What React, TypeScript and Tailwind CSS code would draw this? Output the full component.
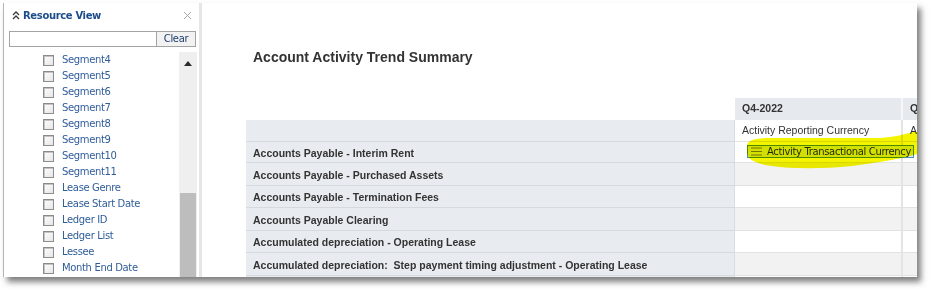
import React from "react";

const items = [
  "Segment4",
  "Segment5",
  "Segment6",
  "Segment7",
  "Segment8",
  "Segment9",
  "Segment10",
  "Segment11",
  "Lease Genre",
  "Lease Start Date",
  "Ledger ID",
  "Ledger List",
  "Lessee",
  "Month End Date",
  "Purchase Unit",
];

const rows = [
  { label: "Accounts Payable - Interim Rent", h: "h-[21px]", alt: false },
  { label: "Accounts Payable - Purchased Assets", h: "h-[23px]", alt: true },
  { label: "Accounts Payable - Termination Fees", h: "h-[22px]", alt: false },
  { label: "Accounts Payable Clearing", h: "h-[23px]", alt: true },
  { label: "Accumulated depreciation - Operating Lease", h: "h-[22px]", alt: false },
  {
    label: "Accumulated depreciation:  Step payment timing adjustment - Operating Lease",
    h: "h-[23px]",
    alt: true,
  },
  { label: "Accumulated depreciation - Right of Use", h: "h-[22px]", alt: false },
];

const tahoma = { fontFamily: '"DejaVu Sans", sans-serif' };
const arial = { fontFamily: '"Liberation Sans", Arial, sans-serif' };

function Checkbox() {
  return (
    <span className="block w-[11px] h-[11px] border border-[#8c8c8c] bg-gradient-to-br from-white to-[#e6e6e6] shadow-[inset_1px_1px_0_#c4c4c4]" />
  );
}

function ResourcePanel() {
  return (
    <div className="w-[196px] h-full shrink-0 border-l border-[#b5b5b5] bg-white flex flex-col" style={tahoma}>
      {/* header */}
      <div className="h-[25px] flex items-center pl-[8px] pr-[5px]">
        <svg width="8" height="9" viewBox="0 0 8 9" className="mr-[3px]">
          <path d="M1 4 L4 1 L7 4" fill="none" stroke="#3a3a3a" strokeWidth="1.3" />
          <path d="M1 8 L4 5 L7 8" fill="none" stroke="#3a3a3a" strokeWidth="1.3" />
        </svg>
        <span className="text-[10px] font-bold tracking-[-0.35px] text-[#1d4c8c]">Resource View</span>
        <svg width="9" height="9" viewBox="0 0 9 9" className="ml-auto mr-[2px]">
          <path d="M1 1 L8 8 M8 1 L1 8" stroke="#a6a6a6" strokeWidth="1" />
        </svg>
      </div>
      {/* search */}
      <div className="mt-[3px] ml-[5px] flex h-[16px]">
        <input className="w-[148px] h-[16px] border border-[#a3a3a3] bg-white outline-none" />
        <button className="w-[39px] h-[16px] border border-l-0 border-[#a3a3a3] bg-[#f2f2f2] text-[10px] tracking-[-0.35px] leading-[14px] text-[#20406e]">
          Clear
        </button>
      </div>
      {/* list */}
      <div className="mt-[5px] ml-[6px] flex flex-1 overflow-hidden">
        <div className="w-[169px]">
          {items.map((t) => (
            <div key={t} className="h-[16px] flex items-center pl-[33px] gap-[8px]">
              <Checkbox />
              <span className="text-[10px] tracking-[-0.35px] text-[#2f5d98] leading-none whitespace-nowrap">{t}</span>
            </div>
          ))}
        </div>
        <div className="w-[18px] bg-[#efefef] flex flex-col items-center">
          <svg width="8" height="5" viewBox="0 0 8 5" className="mt-[9px]">
            <path d="M0 5 L4 0 L8 5 Z" fill="#2b2b2b" />
          </svg>
          <div className="mt-[127px] w-[16px] flex-1 bg-[#bdbdbd]" />
        </div>
      </div>
    </div>
  );
}

function Report() {
  return (
    <div className="flex-1 h-full overflow-hidden bg-white pl-[44px]" style={arial}>
      <div className="mt-[46px] ml-[7px] text-[14px] leading-[16px] font-bold text-[#333333]">
        Account Activity Trend Summary
      </div>
      <div className="mt-[33px] w-[800px] text-[10.5px] text-[#333333] whitespace-nowrap">
        {/* header row */}
        <div className="flex h-[22px]">
          <div className="w-[489px] shrink-0 bg-white" />
          <div className="w-[168px] shrink-0 bg-[#e6eaee] flex items-center pl-[7px] font-bold border-r-2 border-[#f6f7f8]">
            Q4-2022
          </div>
          <div className="w-[140px] shrink-0 bg-[#e6eaee] flex items-center pl-[7px] font-bold">Q1-2023</div>
        </div>
        {/* currency row */}
        <div className="flex h-[22px]">
          <div className="w-[489px] shrink-0 bg-[#e8ecf0] border-b border-[#d6dade] border-r border-r-[#d9dde1]" />
          <div className="w-[168px] shrink-0 bg-white flex items-center pl-[7px] border-b border-[#e2e2e2] border-r-2 border-r-[#e4e4e4]">
            Activity Reporting Currency
          </div>
          <div className="w-[140px] shrink-0 bg-white flex items-center pl-[7px] border-b border-[#e2e2e2]">
            Activity Reporting Currency
          </div>
        </div>
        {rows.map((r) => (
          <div key={r.label} className={`flex ${r.h}`}>
            <div className="w-[489px] shrink-0 bg-[#e8ecf0] flex items-center pl-[7px] pt-[3px] font-bold whitespace-pre border-b border-[#d6dade] border-r border-r-[#d9dde1]">
              {r.label}
            </div>
            <div
              className={`w-[168px] shrink-0 border-b border-[#e2e2e2] border-r-2 border-r-[#e4e4e4] ${
                r.alt ? "bg-[#f2f2f2]" : "bg-white"
              }`}
            />
            <div className={`w-[140px] shrink-0 border-b border-[#e2e2e2] ${r.alt ? "bg-[#f2f2f2]" : "bg-white"}`} />
          </div>
        ))}
      </div>
    </div>
  );
}

export default function App() {
  return (
    <div className="relative w-[930px] h-[291px] bg-white pt-[3px] pl-[3px] overflow-hidden">
      <div className="w-[914px] h-[274px] flex bg-white shadow-[4px_5px_6px_rgba(0,0,0,0.5)] overflow-hidden">
        <ResourcePanel />
        <div className="w-[3px] h-full shrink-0 bg-[#e6e6e6]" />
        <Report />
      </div>

      {/* dragged column item */}
      <div
        className="absolute left-[747px] top-[145px] w-[167px] h-[13px] border border-[#4b8fb5] bg-[#dde9f4] flex items-center pl-[3px]"
        style={tahoma}
      >
        <svg width="11" height="9" viewBox="0 0 11 9">
          <path d="M0 1 H11 M0 4.5 H11 M0 8 H11" stroke="#7a7a7a" strokeWidth="1" />
        </svg>
        <span className="ml-[5px] text-[10px] tracking-[-0.35px] leading-none text-[#1b2a14] whitespace-nowrap">
          Activity Transactional Currency
        </span>
      </div>

      {/* highlighter stroke */}
      <svg
        className="absolute left-[740px] top-[128px] mix-blend-multiply pointer-events-none"
        width="180"
        height="45"
        viewBox="740 128 180 45"
      >
        <path
          d="M747 146 C747 140 755 138 770 138 L880 138 C895 137 905 134 913 132 L917 132 L917 154 C905 158 882 162 852 166 C822 169 792 169 772 166 C757 164 747 160 747 152 Z"
          fill="#f4f400"
        />
      </svg>
    </div>
  );
}
